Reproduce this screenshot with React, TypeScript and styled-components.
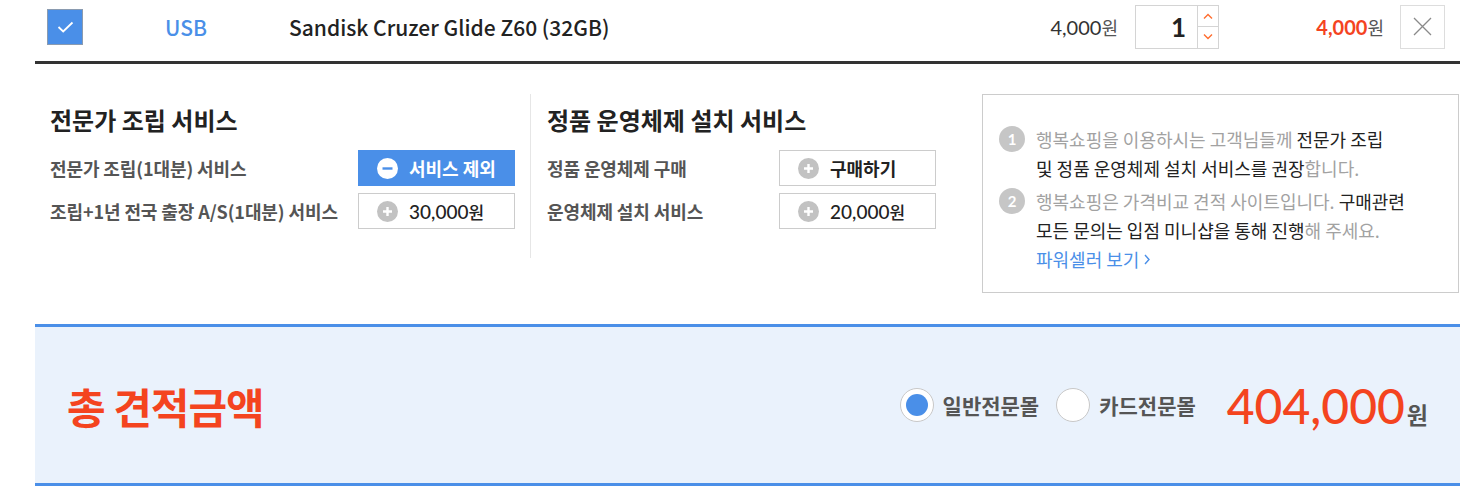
import styled, { createGlobalStyle } from 'styled-components';

const KR = '"Noto Sans CJK KR", "Noto Sans", sans-serif';
const NUM = 'Lato, "Noto Sans CJK KR", sans-serif';

const colors = {
    blue: '#4a8fe8',
    red: '#f4441f',
    text: '#222222',
    label: '#555555',
    gray: '#999999',
    line: '#cccccc',
};

const GlobalStyle = createGlobalStyle`
    html, body {
        margin: 0;
        padding: 0;
        background: #ffffff;
        font-family: ${KR};
        color: ${colors.text};
    }
`;

const Page = styled.div`
    width: 1425px;
    margin-left: 35px;
`;

/* ---------- product row ---------- */

const ProductRow = styled.div`
    display: flex;
    align-items: center;
    height: 53px;
    padding: 0 15px 8px 0;
    border-bottom: 3px solid #333333;
`;

const CheckBox = styled.div`
    box-sizing: border-box;
    width: 36px;
    height: 36px;
    margin-left: 12px;
    background: ${colors.blue};
    border: 1px solid #8a9bb0;
    display: flex;
    align-items: center;
    justify-content: center;
`;

const Category = styled.div`
    width: 206px;
    text-align: center;
    font-size: 21px;
    font-weight: 500;
    color: ${colors.blue};
`;

const ProductName = styled.div`
    flex: 1;
    font-size: 21px;
    font-weight: 500;
    color: ${colors.text};
`;

const Price = styled.div<{ $red?: boolean }>`
    font-family: ${NUM};
    font-size: 20px;
    color: ${({ $red }) => ($red ? colors.red : '#333333')};
    font-weight: ${({ $red }) => ($red ? 700 : 400)};
    text-align: right;
    white-space: nowrap;

    span {
        font-family: ${KR};
        font-size: 18px;
        font-weight: 400;
        color: #555555;
    }
`;

const QtyBox = styled.div`
    box-sizing: border-box;
    display: flex;
    width: 84px;
    height: 44px;
    margin-left: 17px;
    border: 1px solid #d4d4d4;
`;

const QtyValue = styled.div`
    flex: 1;
    display: flex;
    align-items: center;
    justify-content: flex-end;
    padding-right: 11px;
    font-family: ${NUM};
    font-size: 26px;
    font-weight: 700;
    color: #222222;
    border-right: 1px solid #d4d4d4;
`;

const QtyArrows = styled.div`
    width: 20px;
    display: flex;
    flex-direction: column;
`;

const Arrow = styled.div<{ $top?: boolean }>`
    flex: 1;
    display: flex;
    align-items: center;
    justify-content: center;
    border-bottom: ${({ $top }) => ($top ? '1px solid #d4d4d4' : 'none')};
`;

const TotalCell = styled.div`
    width: 165px;
    display: flex;
    justify-content: flex-end;
`;

const RemoveButton = styled.div`
    box-sizing: border-box;
    width: 45px;
    height: 44px;
    margin-left: 16px;
    border: 1px solid #dddddd;
    display: flex;
    align-items: center;
    justify-content: center;
`;

/* ---------- services ---------- */

const Services = styled.div`
    display: flex;
    align-items: flex-start;
    padding: 30px 1px 0 0;
`;

const ServiceColumn = styled.div<{ $width: number; $divider?: boolean }>`
    box-sizing: border-box;
    width: ${({ $width }) => $width}px;
    padding: 10px 15px 29px;
    border-right: ${({ $divider }) => ($divider ? '1px solid #e6e6e6' : 'none')};
    padding-left: ${({ $divider }) => ($divider ? 15 : 16)}px;
`;

const ServiceTitle = styled.h3`
    margin: 0 0 14px;
    font-size: 24px;
    line-height: 32px;
    font-weight: 700;
    color: #222222;
`;

const ServiceRow = styled.div`
    display: flex;
    align-items: center;
    margin-top: 7px;

    &:first-of-type {
        margin-top: 0;
    }
`;

const ServiceLabel = styled.div<{ $width: number }>`
    width: ${({ $width }) => $width}px;
    font-size: 18px;
    font-weight: 700;
    color: ${colors.label};
    letter-spacing: -0.1px;
`;

const ServiceButton = styled.div<{ $active?: boolean }>`
    box-sizing: border-box;
    width: 157px;
    height: 36px;
    display: flex;
    align-items: center;
    gap: 11px;
    padding-left: 18px;
    background: ${({ $active }) => ($active ? colors.blue : '#ffffff')};
    border: 1px solid ${({ $active }) => ($active ? colors.blue : colors.line)};
    color: ${({ $active }) => ($active ? '#ffffff' : '#222222')};
    font-size: 18px;
    font-weight: 700;
`;

const Amount = styled.span`
    font-family: ${NUM};
    font-weight: 500;
    font-size: 19px;

    em {
        font-style: normal;
        font-family: ${KR};
        font-size: 17px;
        font-weight: 500;
    }
`;

const InfoBox = styled.div`
    box-sizing: border-box;
    width: 477px;
    height: 199px;
    margin-left: auto;
    padding: 30px 10px 0 16px;
    border: 1px solid #cccccc;
`;

const InfoItem = styled.div`
    display: flex;
    align-items: flex-start;
    gap: 11px;

    & + & {
        margin-top: 4px;
    }
`;

const NumberBadge = styled.div`
    flex: none;
    width: 26px;
    height: 26px;
    margin-top: 1px;
    border-radius: 50%;
    background: #c6c6c6;
    color: #ffffff;
    font-family: ${NUM};
    font-size: 15px;
    font-weight: 700;
    display: flex;
    align-items: center;
    justify-content: center;
`;

const InfoText = styled.p`
    margin: 0;
    font-size: 18px;
    line-height: 29px;
    color: #a2a2a2;

    b {
        font-weight: 400;
        color: #222222;
    }
`;

const PowerLink = styled.a`
    display: inline-flex;
    align-items: center;
    gap: 5px;
    margin-left: 37px;
    font-size: 18px;
    line-height: 29px;
    color: ${colors.blue};
    text-decoration: none;
`;

/* ---------- total ---------- */

const TotalPanel = styled.div`
    display: flex;
    align-items: center;
    height: 156px;
    margin-top: 31px;
    padding: 0 32px;
    background: #eaf2fc;
    border-top: 3px solid ${colors.blue};
    border-bottom: 3px solid ${colors.blue};
`;

const TotalTitle = styled.h2`
    margin: 0;
    flex: 1;
    font-size: 42px;
    font-weight: 700;
    color: ${colors.red};
    letter-spacing: -1px;
`;

const RadioOption = styled.label`
    display: flex;
    align-items: center;
    gap: 9px;
    margin-right: 17px;
    font-size: 21px;
    font-weight: 700;
    color: #555555;

    &:last-of-type {
        margin-right: 31px;
    }
`;

const RadioCircle = styled.span<{ $checked?: boolean }>`
    box-sizing: border-box;
    width: 34px;
    height: 34px;
    border-radius: 50%;
    border: 1px solid #c8c8c8;
    background: #ffffff;
    display: flex;
    align-items: center;
    justify-content: center;

    &::after {
        content: '';
        width: 22px;
        height: 22px;
        border-radius: 50%;
        background: ${({ $checked }) => ($checked ? colors.blue : 'transparent')};
    }
`;

const GrandTotal = styled.div`
    display: flex;
    align-items: baseline;
    font-family: ${NUM};
    font-size: 48px;
    font-weight: 500;
    color: ${colors.red};

    span {
        font-family: ${KR};
        font-size: 23px;
        font-weight: 700;
        color: #555555;
        margin-left: 2px;
    }
`;

/* ---------- icons ---------- */

const CheckIcon = () => (
    <svg width='17' height='12' viewBox='0 0 17 12'>
        <path d='M1.5 6 L6.2 10.4 L15.5 1.5' fill='none' stroke='#ffffff' strokeWidth='1.8' />
    </svg>
);

const Chevron = ({ up }: { up?: boolean }) => (
    <svg width='10' height='6' viewBox='0 0 10 6'>
        <path
            d={up ? 'M1 5.5 L5 1.5 L9 5.5' : 'M1 0.5 L5 4.5 L9 0.5'}
            fill='none'
            stroke='#ff6d2e'
            strokeWidth='1.4'
        />
    </svg>
);

const CloseIcon = () => (
    <svg width='19' height='19' viewBox='0 0 19 19'>
        <path d='M1 1 L18 18 M18 1 L1 18' stroke='#8a8a8a' strokeWidth='1.3' />
    </svg>
);

const RoundIcon = ({ minus }: { minus?: boolean }) => (
    <svg width='21' height='21' viewBox='0 0 21 21'>
        <circle cx='10.5' cy='10.5' r='10.5' fill={minus ? '#ffffff' : '#c2c2c2'} />
        <path
            d={minus ? 'M5.5 10.5 H15.5' : 'M6 10.5 H15 M10.5 6 V15'}
            stroke={minus ? colors.blue : '#ffffff'}
            strokeWidth='2.4'
        />
    </svg>
);

const SmallArrow = () => (
    <svg width='6' height='11' viewBox='0 0 6 11'>
        <path d='M1 1 L5 5.5 L1 10' fill='none' stroke={colors.blue} strokeWidth='1.4' />
    </svg>
);

const App = () => (
    <Page>
        <GlobalStyle />
        <ProductRow>
            <CheckBox>
                <CheckIcon />
            </CheckBox>
            <Category>USB</Category>
            <ProductName>Sandisk Cruzer Glide Z60 (32GB)</ProductName>
            <Price>4,000<span>원</span></Price>
            <QtyBox>
                <QtyValue>1</QtyValue>
                <QtyArrows>
                    <Arrow $top><Chevron up /></Arrow>
                    <Arrow><Chevron /></Arrow>
                </QtyArrows>
            </QtyBox>
            <TotalCell>
                <Price $red>4,000<span>원</span></Price>
            </TotalCell>
            <RemoveButton>
                <CloseIcon />
            </RemoveButton>
        </ProductRow>

        <Services>
            <ServiceColumn $width={496} $divider>
                <ServiceTitle>전문가 조립 서비스</ServiceTitle>
                <ServiceRow>
                    <ServiceLabel $width={308}>전문가 조립(1대분) 서비스</ServiceLabel>
                    <ServiceButton $active>
                        <RoundIcon minus />
                        서비스 제외
                    </ServiceButton>
                </ServiceRow>
                <ServiceRow>
                    <ServiceLabel $width={308}>조립+1년 전국 출장 A/S(1대분) 서비스</ServiceLabel>
                    <ServiceButton>
                        <RoundIcon />
                        <Amount>30,000<em>원</em></Amount>
                    </ServiceButton>
                </ServiceRow>
            </ServiceColumn>
            <ServiceColumn $width={420}>
                <ServiceTitle>정품 운영체제 설치 서비스</ServiceTitle>
                <ServiceRow>
                    <ServiceLabel $width={232}>정품 운영체제 구매</ServiceLabel>
                    <ServiceButton>
                        <RoundIcon />
                        구매하기
                    </ServiceButton>
                </ServiceRow>
                <ServiceRow>
                    <ServiceLabel $width={232}>운영체제 설치 서비스</ServiceLabel>
                    <ServiceButton>
                        <RoundIcon />
                        <Amount>20,000<em>원</em></Amount>
                    </ServiceButton>
                </ServiceRow>
            </ServiceColumn>
            <InfoBox>
                <InfoItem>
                    <NumberBadge>1</NumberBadge>
                    <InfoText>
                        행복쇼핑을 이용하시는 고객님들께 <b>전문가 조립</b>
                        <br />
                        <b>및 정품 운영체제 설치 서비스를 권장</b>합니다.
                    </InfoText>
                </InfoItem>
                <InfoItem>
                    <NumberBadge>2</NumberBadge>
                    <InfoText>
                        행복쇼핑은 가격비교 견적 사이트입니다. <b>구매관련</b>
                        <br />
                        <b>모든 문의는 입점 미니샵을 통해 진행</b>해 주세요.
                    </InfoText>
                </InfoItem>
                <PowerLink href='#'>
                    파워셀러 보기
                    <SmallArrow />
                </PowerLink>
            </InfoBox>
        </Services>

        <TotalPanel>
            <TotalTitle>총 견적금액</TotalTitle>
            <RadioOption>
                <RadioCircle $checked />
                일반전문몰
            </RadioOption>
            <RadioOption>
                <RadioCircle />
                카드전문몰
            </RadioOption>
            <GrandTotal>
                404,000<span>원</span>
            </GrandTotal>
        </TotalPanel>
    </Page>
);

export default App;
